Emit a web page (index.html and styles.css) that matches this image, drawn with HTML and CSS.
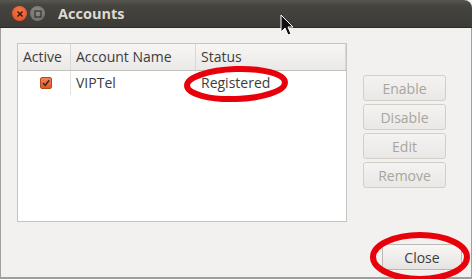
FILE: index.html
```html
<!DOCTYPE html>
<html lang="en">
<head>
<meta charset="UTF-8">
<title>Accounts</title>
<link rel="stylesheet" href="styles.css">
</head>
<body>
<div class="window">
  <div class="titlebar">
    <span class="wbtn close-x">
      <svg width="10" height="10" viewBox="0 0 10 10"><path d="M2.5 2.5 L7.5 7.5 M7.5 2.5 L2.5 7.5" stroke="#3a1a10" stroke-width="1.6"/></svg>
    </span>
    <span class="wbtn mini">
      <svg width="10" height="10" viewBox="0 0 10 10"><rect x="2" y="2" width="6" height="6" fill="none" stroke="#3c3b37" stroke-width="1.4"/></svg>
    </span>
    <span class="title">Accounts</span>
  </div>

  <div class="content">
    <div class="main">
      <div class="tree">
        <div class="thead">
          <div class="col c-active">Active</div>
          <div class="col c-name">Account Name</div>
          <div class="col c-status">Status</div>
        </div>
        <div class="trow">
          <div class="col c-active">
            <span class="check">
              <svg width="10" height="10" viewBox="0 0 10 10"><path d="M2 5 L4.2 7.3 L8.3 2.2" fill="none" stroke="#3a2a20" stroke-width="1.5"/></svg>
            </span>
          </div>
          <div class="col c-name">VIPTel</div>
          <div class="col c-status">Registered</div>
        </div>
      </div>
      <div class="side">
        <button class="btn" disabled>Enable</button>
        <button class="btn" disabled>Disable</button>
        <button class="btn" disabled>Edit</button>
        <button class="btn" disabled>Remove</button>
      </div>
    </div>
    <div class="footer">
      <button class="btn close-btn">Close</button>
    </div>
  </div>

  <svg class="marks" width="472" height="279" viewBox="0 0 472 279">
    <ellipse cx="236" cy="84" rx="49" ry="15" fill="none" stroke="#e8000b" stroke-width="6" transform="rotate(-2 236 84)"/>
    <ellipse cx="420" cy="257" rx="47" ry="22" fill="none" stroke="#e8000b" stroke-width="6"/>
    <path d="M281 15 L281 32 L285 28 L288 35 L291 34 L288 27 L293 27 Z" fill="#111" stroke="#fff" stroke-width="1"/>
  </svg>
</div>
</body>
</html>
```

FILE: styles.css
```css
body {
  margin: 0;
  padding: 0;
  font-family: "Open Sans", "DejaVu Sans", sans-serif;
  font-size: 14px;
  background: #f2f1f0;
}

.window {
  position: relative;
  width: 472px;
  height: 279px;
  overflow: hidden;
  background: #f2f1f0;
}

.titlebar {
  height: 27px;
  display: flex;
  align-items: center;
  background: linear-gradient(#57564f, #45443f 20%, #3c3b37);
  border-top-right-radius: 8px;
  border-bottom: 1px solid #2c2b28;
  padding-left: 12px;
}

.wbtn {
  width: 15px;
  height: 15px;
  border-radius: 50%;
  display: flex;
  align-items: center;
  justify-content: center;
  margin-right: 3px;
}

.close-x {
  background: radial-gradient(circle at 50% 35%, #f47a4f, #df4a1c);
}

.mini {
  background: radial-gradient(circle at 50% 35%, #8c8a85, #6e6c67);
}

.title {
  margin-left: 10px;
  color: #dfdbd2;
  font-weight: bold;
  font-size: 14.5px;
}

.content {
  height: 251px;
  border-left: 1px solid #a19f9b;
  border-right: 1px solid #a19f9b;
  border-bottom: 2px solid #a19f9b;
  box-sizing: border-box;
  padding: 15px 0 0 16px;
  display: flex;
  flex-direction: column;
}

.main {
  display: flex;
}

.tree {
  width: 328px;
  height: 177px;
  background: #fff;
  border: 1px solid #c7c5c1;
}

.thead,
.trow {
  display: flex;
}

.thead {
  height: 26px;
  background: linear-gradient(#f7f6f5, #ebe9e6);
  border-bottom: 1px solid #c4c2be;
  color: #3c3c3c;
}

.thead .col {
  line-height: 26px;
  border-right: 1px solid #dad8d4;
}

.trow {
  height: 24px;
  line-height: 24px;
  color: #3c3c3c;
}

.col {
  box-sizing: border-box;
  padding-left: 5px;
}

.c-active {
  width: 53px;
  border-right: 1px solid #e4e2de;
}

.c-name {
  width: 125px;
}

.c-status {
  flex: 1;
}

.trow .c-active {
  display: flex;
  align-items: center;
  padding-left: 22px;
}

.check {
  width: 10px;
  height: 10px;
  border-radius: 2px;
  background: linear-gradient(#f48357, #df5a2a);
  border: 1px solid #b9461d;
  display: flex;
  align-items: center;
  justify-content: center;
}

.side {
  display: flex;
  flex-direction: column;
  gap: 3px;
  margin-left: 16px;
  margin-top: 32px;
}

.btn {
  width: 83px;
  height: 26px;
  padding: 0;
  font-family: "Open Sans", "DejaVu Sans", sans-serif;
  font-size: 14px;
  color: #3c3c3c;
  background: linear-gradient(#f8f7f6, #e6e4e1);
  border: 1px solid #bcb9b4;
  border-radius: 3px;
}

.btn:disabled {
  color: #a9a59e;
  background: linear-gradient(#f4f3f2, #eae8e5);
  border-color: #d2cfcb;
}

.footer {
  display: flex;
  justify-content: flex-end;
  margin-top: 22px;
  padding-right: 9px;
}

.close-btn {
  width: 80px;
}

.marks {
  position: absolute;
  left: 0;
  top: 0;
}
```
